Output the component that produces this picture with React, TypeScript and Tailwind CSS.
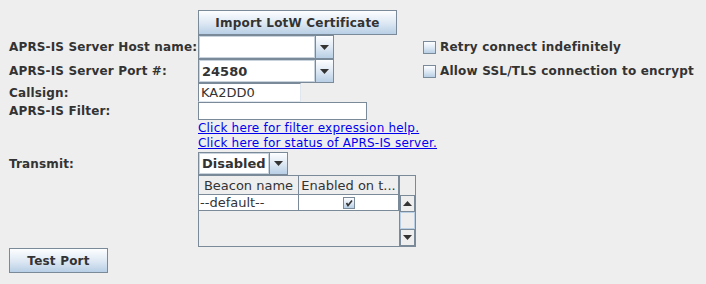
const grad = "bg-linear-to-b from-[#fdfeff] via-[#dfe9f4] to-[#b8cfe5]";

function Arrow({ up = false }: { up?: boolean }) {
  return (
    <svg width="9" height="5" viewBox="0 0 9 5" className="block">
      {up ? <path d="M0 5 L4.5 0 L9 5 Z" fill="#333" /> : <path d="M0 0 L9 0 L4.5 5 Z" fill="#333" />}
    </svg>
  );
}

function Combo({ value, width, height }: { value: string; width: number; height: number }) {
  return (
    <div className="flex border border-[#7a8a99]" style={{ width, height }}>
      <div className="flex-1 bg-white border border-[#c9d3de] flex items-center pl-[2px] text-[13px] font-bold">
        {value}
      </div>
      <div className={`w-[18px] border-l border-[#7a8a99] flex items-center justify-center ${grad}`}>
        <Arrow />
      </div>
    </div>
  );
}

function Check({ label }: { label: string }) {
  return (
    <div className="flex items-center gap-[4px] font-bold tracking-[0.2px]">
      <div className={`w-[13px] h-[13px] border border-[#7a8a99] ${grad}`} />
      <span>{label}</span>
    </div>
  );
}

function Label({ children }: { children: string }) {
  return <div className="w-[189px] shrink-0 flex items-center font-bold tracking-[0.15px]">{children}</div>;
}

export default function App() {
  return (
    <div
      className="w-[706px] h-[284px] bg-[#eeeeee] text-[#333333] text-[12px] leading-none pl-[9px] pt-[10px] overflow-hidden"
      style={{ fontFamily: '"DejaVu Sans", sans-serif' }}
    >
      {/* import button */}
      <div className="ml-[189px]">
        <div className={`w-[199px] h-[25px] border border-[#7a8a99] flex items-center justify-center font-bold tracking-[0.2px] ${grad}`}>
          Import LotW Certificate
        </div>
      </div>

      <div className="flex h-[24px]">
        <Label>APRS-IS Server Host name:</Label>
        <Combo value="" width={136} height={24} />
        <div className="ml-[89px] flex items-center">
          <Check label="Retry connect indefinitely" />
        </div>
      </div>

      <div className="flex h-[24px]">
        <Label>APRS-IS Server Port #:</Label>
        <Combo value="24580" width={136} height={24} />
        <div className="ml-[89px] flex items-center">
          <Check label="Allow SSL/TLS connection to encrypt" />
        </div>
      </div>

      <div className="flex h-[19px]">
        <Label>Callsign:</Label>
        <div className="w-[103px] h-[19px] bg-white border border-[#7a8a99] border-r-[#dfe6ee] border-b-[#dfe6ee] flex items-center pl-[2px] text-[13px]">
          KA2DD0
        </div>
      </div>

      <div className="flex h-[18px]">
        <Label>APRS-IS Filter:</Label>
        <div className="w-[169px] h-[18px] bg-white border border-[#7a8a99]" />
      </div>

      <div className="ml-[189px] flex flex-col text-[#0000ee] underline text-[12px] tracking-[0.2px] leading-[15px] pt-[1px]">
        <span>Click here for filter expression help.</span>
        <span>Click here for status of APRS-IS server.</span>
      </div>

      <div className="flex h-[23px] mt-[1px]">
        <Label>Transmit:</Label>
        <Combo value="Disabled" width={90} height={23} />
      </div>

      {/* beacon table */}
      <div className="ml-[189px] w-[218px] h-[72px] border border-[#7a8a99] flex">
        <div className="w-[200px] flex flex-col">
          <div className="flex h-[19px] border-b border-[#7a8a99] text-[13px]">
            <div className="w-[100px] border-r border-[#7a8a99] flex items-center justify-center">Beacon name</div>
            <div className="w-[100px] border-r border-[#7a8a99] flex items-center justify-center">Enabled on t...</div>
          </div>
          <div className="flex h-[16px] bg-white border-b border-[#7a8a99] text-[13px]">
            <div className="w-[100px] border-r border-[#7a8a99] flex items-center pl-[1px]">--default--</div>
            <div className="w-[100px] border-r border-[#7a8a99] flex items-center justify-center">
              <div className={`w-[12px] h-[12px] border border-[#7a8a99] flex items-center justify-center ${grad}`}>
                <svg width="8" height="8" viewBox="0 0 8 8">
                  <path d="M1.5 4 L3 6.5 L7 1.5" stroke="#333" strokeWidth="1.6" fill="none" />
                </svg>
              </div>
            </div>
          </div>
        </div>
        <div className="w-[16px] flex flex-col border-l border-[#7a8a99]">
          <div className="h-[19px]" />
          <div className="h-[17px] border border-[#7a8a99] bg-[#eeeeee] flex items-center justify-center">
            <Arrow up />
          </div>
          <div className="h-[17px] border border-[#b8cfe5] bg-[#eeeeee]" />
          <div className="h-[17px] border border-[#7a8a99] bg-[#eeeeee] flex items-center justify-center">
            <Arrow />
          </div>
        </div>
      </div>

      <div className={`mt-[1px] w-[99px] h-[25px] border border-[#7a8a99] flex items-center justify-center font-bold tracking-[0.2px] ${grad}`}>
        Test Port
      </div>
    </div>
  );
}
